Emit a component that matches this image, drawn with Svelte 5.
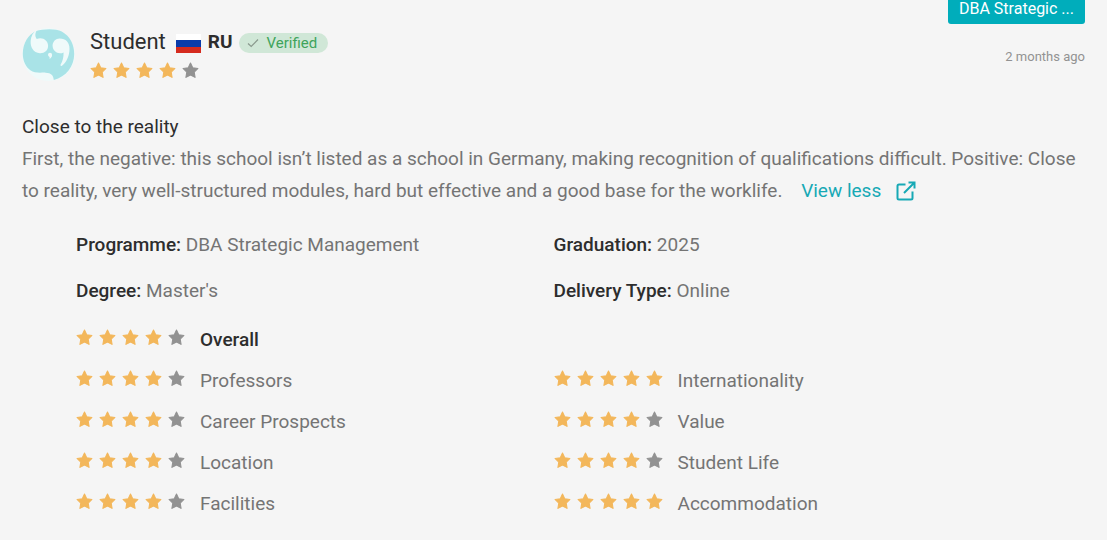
<script lang="ts">
  type Rating = { label: string; score: number };

  const details = [
    { name: "Programme", value: "DBA Strategic Management" },
    { name: "Graduation", value: "2025" },
    { name: "Degree", value: "Master's" },
    { name: "Delivery Type", value: "Online" },
  ];

  const leftRatings: Rating[] = [
    { label: "Overall", score: 4 },
    { label: "Professors", score: 4 },
    { label: "Career Prospects", score: 4 },
    { label: "Location", score: 4 },
    { label: "Facilities", score: 4 },
  ];

  const rightRatings: Rating[] = [
    { label: "Internationality", score: 5 },
    { label: "Value", score: 4 },
    { label: "Student Life", score: 4 },
    { label: "Accommodation", score: 5 },
  ];
</script>

{#snippet stars(score: number)}
  <span class="stars" role="img" aria-label="{score} out of 5 stars">
    {#each [1, 2, 3, 4, 5] as n}
      <svg class="star" class:empty={n > score} viewBox="0 0 16 16">
        <path d="M8 1l2.100 4.400 4.900.7-3.500 3.400.8 5L8 12.200l-4.300 2.300.8-5L1 6.100l4.900-.7z" />
      </svg>
    {/each}
  </span>
{/snippet}

{#snippet ratingList(ratings: Rating[])}
  <ul class="ratings">
    {#each ratings as rating}
      <li>
        {@render stars(rating.score)}
        <span class="label" class:overall={rating.label === "Overall"}>{rating.label}</span>
      </li>
    {/each}
  </ul>
{/snippet}

<article class="review">
  <header>
    <svg class="avatar" viewBox="0 0 52 52" aria-hidden="true">
      <circle cx="26" cy="26" r="26" fill="#effafa" />
      <path fill="#a9e3e7" d="M14 3C20 1 33 .2 39 3.500 47 8 51.200 16 51.200 25.500c0 12-8 22.500-20 25.500-.3-4.500-2.500-7-8-7.200-5-.2-11 .8-15-2.300C3.500 38 .8 32 .8 25.500.8 15 6 6.500 14 3z" />
      <g fill="#effafa">
        <path d="M15 1.500C12.500 5 12.700 8.500 14.500 10.800 20 8.500 25.600 12 25.600 17.500c0 5-4 7.500-8 7.200C11 24.300 8 18.500 8.500 12.500 8.800 8 11 4 15 1.500z" />
        <path d="M37 10.200c6 0 9.600 4 9.600 9.800 0 7-2.600 13-7.400 17-.9.6-1.800-.2-1.300-1.100 2-3.500 3-7 2.900-11.900-5 2.500-10.800-1-10.800-6.500 0-4.300 3-7.300 7-7.300z" />
        <circle cx="27.500" cy="26.300" r="2" />
        <path d="M29.500 26.300c0 2-1 3.300-2.500 4 .3-1.200 0-2-.7-3z" />
      </g>
    </svg>
    <div class="author">
      <div class="name-row">
        <span class="name">Student</span>
        <span class="flag"></span>
        <strong class="country">RU</strong>
        <span class="verified">
          <svg viewBox="0 0 12 12" aria-hidden="true"><path d="M1 6.500l3.200 3L11 2.500" /></svg>
          Verified
        </span>
      </div>
      {@render stars(4)}
    </div>
    <div class="meta">
      <a class="tag" href="#programme">DBA Strategic ...</a>
      <time>2 months ago</time>
    </div>
  </header>

  <h3>Close to the reality</h3>
  <p class="text">
    First, the negative: this school isn’t listed as a school in Germany, making recognition of
    qualifications difficult. Positive: Close to reality, very well-structured modules, hard but
    effective and a good base for the worklife.
    <button class="toggle" type="button">
      View less
      <svg viewBox="0 0 20 20" aria-hidden="true">
        <path d="M9.500 3.500H3A1.500 1.500 0 0 0 1.500 5v12A1.500 1.500 0 0 0 3 18.500h12a1.500 1.500 0 0 0 1.500-1.500v-6.500M8 12L18 2M12.500 1.500h6v6" />
      </svg>
    </button>
  </p>

  <dl class="details">
    {#each details as item}
      <div>
        <dt>{item.name}:</dt>
        <dd>{item.value}</dd>
      </div>
    {/each}
  </dl>

  <div class="rating-columns">
    {@render ratingList(leftRatings)}
    {@render ratingList(rightRatings)}
  </div>
</article>

<style>
  :global(body) {
    margin: 0;
    background: #f5f5f5;
  }

  .review {
    padding: 0 22px 16px;
    font-family: Roboto, "Liberation Sans", sans-serif;
    font-size: 19px;
    line-height: 32px;
    color: #747474;
    overflow: hidden;
  }

  header {
    display: flex;
    align-items: flex-start;
  }

  .avatar {
    width: 53px;
    height: 53px;
    margin-top: 28px;
  }

  .author {
    flex: 1;
    margin: 26px 0 0 15px;
  }

  .name-row {
    display: flex;
    align-items: center;
    color: #2d2d2d;
  }

  .name {
    font-size: 22px;
  }

  .flag {
    width: 25px;
    height: 19px;
    margin: 2px 7px 0 10px;
    background: linear-gradient(#fff 33%, #0b3caa 33% 67%, #d52b1e 67%);
  }

  .country {
    font-size: 19px;
    font-weight: 700;
  }

  .verified {
    display: flex;
    align-items: center;
    gap: 8px;
    height: 20px;
    margin: 2px 0 0 6px;
    padding: 0 11px 0 8px;
    border-radius: 10px;
    background: #d0e7d7;
    color: #3fa45b;
    font-size: 15px;
  }

  .verified svg {
    width: 12px;
    height: 12px;
    fill: none;
    stroke: #8a9a8e;
    stroke-width: 1.2;
  }

  .stars {
    display: inline-flex;
    gap: 6px;
  }

  .author .stars {
    display: flex;
    margin-top: 4px;
  }

  .star {
    width: 17px;
    height: 17px;
    fill: #f3b75b;
    stroke: #f3b75b;
    stroke-linejoin: round;
  }

  .star.empty {
    fill: #929292;
    stroke: #929292;
  }

  .meta {
    display: flex;
    flex-direction: column;
    align-items: flex-end;
  }

  /* the tag hangs over the top edge of the card */
  .tag {
    margin-top: -6px;
    padding: 0 11px;
    border-radius: 3px;
    background: #00adbb;
    color: #fff;
    font-size: 16px;
    line-height: 30px;
    text-decoration: none;
  }

  time {
    margin-top: 17px;
    font-size: 13px;
    color: #929292;
  }

  h3 {
    margin: 30px 0 0;
    font-size: 19px;
    font-weight: 400;
    color: #2d2d2d;
  }

  .text {
    margin: 0;
  }

  .toggle {
    display: inline-flex;
    align-items: center;
    gap: 15px;
    margin-left: 14px;
    padding: 0;
    border: 0;
    background: none;
    color: #17a9b5;
    font: inherit;
    cursor: pointer;
  }

  .toggle svg {
    width: 20px;
    height: 20px;
    fill: none;
    stroke: currentColor;
    stroke-width: 2;
  }

  .details,
  .rating-columns {
    display: grid;
    grid-template-columns: 1fr 1fr;
    margin: 0;
    padding: 0 54px;
  }

  .details {
    row-gap: 14px;
    margin: 22px 0 10px;
  }

  dt,
  dd {
    display: inline;
    margin: 0;
  }

  dt {
    font-weight: 500;
    color: #2d2d2d;
  }

  .ratings {
    display: flex;
    flex-direction: column;
    justify-content: flex-end;
    margin: 0;
    padding: 0;
    list-style: none;
  }

  .ratings li {
    display: flex;
    align-items: center;
    gap: 15px;
    height: 41px;
  }

  .ratings .label {
    padding-top: 4px;
  }

  .ratings .overall {
    font-weight: 500;
    color: #2d2d2d;
  }
</style>
